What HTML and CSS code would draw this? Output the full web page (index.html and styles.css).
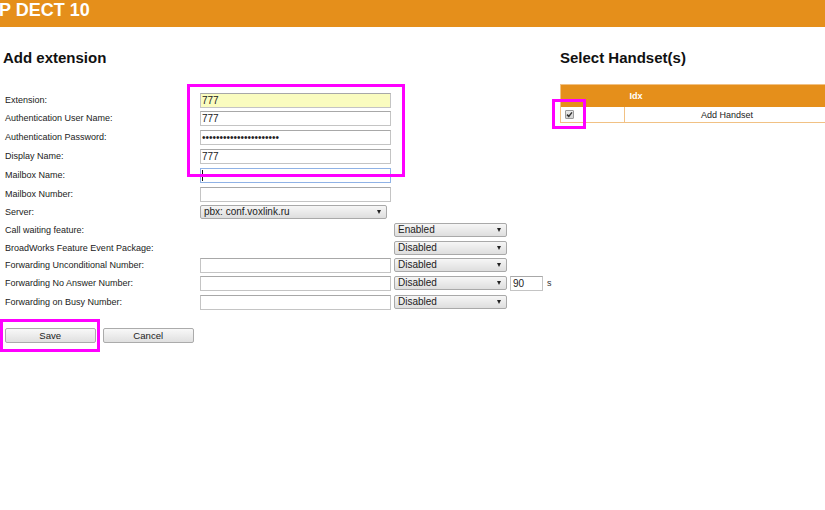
FILE: index.html
```html
<!DOCTYPE html>
<html lang="en">
<head>
<meta charset="utf-8">
<title>Add extension</title>
<link rel="stylesheet" href="styles.css">
</head>
<body>
<header class="topbar"><span class="title">P DECT 10</span></header>
<main class="page">
  <section class="left">
    <h2 class="heading">Add extension</h2>
    <form class="ext-form">
      <label class="c-label">Extension:</label>
      <input class="c-input field autofill" type="text" value="777">

      <label class="c-label">Authentication User Name:</label>
      <input class="c-input field" type="text" value="777">

      <label class="c-label">Authentication Password:</label>
      <input class="c-input field" type="password" value="0123456789012345678901">

      <label class="c-label">Display Name:</label>
      <input class="c-input field" type="text" value="777">

      <label class="c-label">Mailbox Name:</label>
      <span class="c-input focus-wrap"><input class="field focused" type="text" value=""></span>

      <label class="c-label">Mailbox Number:</label>
      <input class="c-input field" type="text" value="">

      <label class="c-label sel-label">Server:</label>
      <span class="c-input sel server"><select><option>pbx: conf.voxlink.ru</option></select></span>

      <label class="c-label sel-label">Call waiting feature:</label>
      <span class="c-select sel"><select><option>Enabled</option><option>Disabled</option></select></span>

      <label class="c-label sel-label">BroadWorks Feature Event Package:</label>
      <span class="c-select sel"><select><option>Disabled</option><option>Enabled</option></select></span>

      <label class="c-label">Forwarding Unconditional Number:</label>
      <input class="c-input field" type="text" value="">
      <span class="c-select sel"><select><option>Disabled</option><option>Enabled</option></select></span>

      <label class="c-label">Forwarding No Answer Number:</label>
      <input class="c-input field" type="text" value="">
      <span class="c-select sel"><select><option>Disabled</option><option>Enabled</option></select></span>
      <input class="c-num field" type="text" value="90">
      <span class="c-unit">s</span>

      <label class="c-label">Forwarding on Busy Number:</label>
      <input class="c-input field" type="text" value="">
      <span class="c-select sel"><select><option>Disabled</option><option>Enabled</option></select></span>
    </form>
    <div class="actions">
      <button type="button" class="btn">Save</button>
      <button type="button" class="btn">Cancel</button>
    </div>
  </section>
  <section class="right">
    <h2 class="heading">Select Handset(s)</h2>
    <table class="handsets">
      <thead>
        <tr><th class="col-check"></th><th class="col-idx">Idx</th></tr>
      </thead>
      <tbody>
        <tr>
          <td class="col-check"><span class="check"><svg viewBox="0 0 9 9" width="9" height="9"><path d="M2 4.6 L3.8 6.4 L7 2.4" fill="none" stroke="#333" stroke-width="1.5"/></svg></span></td>
          <td class="col-name">Add Handset</td>
        </tr>
      </tbody>
    </table>
  </section>
</main>
<div class="mark mark-fields"></div>
<div class="mark mark-save"></div>
<div class="mark mark-check"></div>
</body>
</html>
```
FILE: styles.css
```css
* { box-sizing: border-box; }
html, body { margin: 0; padding: 0; }
body {
  background: #fff;
  font-family: "Liberation Sans", Arial, sans-serif;
  color: #222;
  width: 825px;
  height: 510px;
  overflow: hidden;
  position: relative;
}
.topbar {
  height: 27px;
  background: #e58f1b;
  overflow: hidden;
  padding-top: 1px;
}
.title {
  display: block;
  color: #fff;
  font-weight: bold;
  font-size: 18px;
  line-height: 18px;
  margin-left: -1px;
  white-space: nowrap;
}
.page {
  display: flex;
}
.left {
  width: 560px;
  flex: none;
}
.right {
  width: 270px;
  flex: none;
}
.heading {
  margin: 22px 0 0 0;
  font-size: 15px;
  line-height: 17px;
  font-weight: bold;
  color: #111;
}
.left .heading { margin-left: 3px; }
.right .heading { margin-left: 0; }

.ext-form {
  margin: 26.5px 0 0 5px;
  display: grid;
  grid-template-columns: 192px 191px 113px 33px auto;
  grid-template-rows: 18.5px 19px 19px 19px 19px 18px 18px 17.5px 17px 18.5px 19px 15.5px;
  column-gap: 3px;
  align-items: start;
}
.c-label { grid-column: 1; font-size: 9px; line-height: 15px; color: #222; white-space: nowrap; }
.c-label.sel-label { line-height: 14px; }
.c-input { grid-column: 2; }
.c-select { grid-column: 3; }
.c-num { grid-column: 4; }
.c-unit { grid-column: 5; font-size: 9px; line-height: 15px; margin-left: 1px; color: #333; }

.field {
  display: block;
  height: 15px;
  width: 100%;
  margin: 0;
  padding: 0 1px;
  border: 1px solid #c4c4c4;
  border-top-color: #a8a8a8;
  border-radius: 0;
  background: #fff;
  font-family: "Liberation Sans", Arial, sans-serif;
  font-size: 10px;
  color: #222;
  outline: none;
}
.field.autofill { background: #fafcbf; }
.focus-wrap { position: relative; display: block; height: 15px; }
.focus-wrap .field.focused { border-color: #8fb2e6; }
.focus-wrap::after {
  content: "";
  position: absolute;
  left: 2px;
  top: 2px;
  width: 1px;
  height: 11px;
  background: #111;
}
.c-num { padding-left: 2px; }

.sel { position: relative; display: block; height: 14px; }
.sel.server { width: 187px; }
.sel select {
  display: block;
  appearance: none;
  -webkit-appearance: none;
  width: 100%;
  height: 14px;
  margin: 0;
  padding: 0 3px;
  border: 1px solid #a9a9a9;
  border-radius: 2px;
  background: linear-gradient(#f6f6f6, #dedede);
  font-family: "Liberation Sans", Arial, sans-serif;
  font-size: 10px;
  line-height: 12px;
  color: #222;
  outline: none;
}
.sel::after {
  content: "";
  position: absolute;
  right: 6px;
  top: 5px;
  border-left: 2.5px solid transparent;
  border-right: 2.5px solid transparent;
  border-top: 4px solid #222;
  pointer-events: none;
}

.actions {
  display: flex;
  gap: 7.5px;
  margin: 17.6px 0 0 5px;
}
.btn {
  width: 90.5px;
  height: 15px;
  margin: 0;
  padding: 0;
  border: 1px solid #ababab;
  border-radius: 2px;
  background: linear-gradient(#f8f8f8, #e0e0e0);
  font-family: "Liberation Sans", Arial, sans-serif;
  font-size: 9.6px;
  color: #222;
}

.handsets {
  margin-top: 18.3px;
  width: 270px;
  border-collapse: collapse;
  border: 1px solid #f1c184;
  font-size: 9px;
}
.handsets th {
  background: #e58f1b;
  color: #fff;
  font-weight: bold;
  height: 22px;
  text-align: left;
  padding: 0 0 1px 5px;
  border: none;
}
.handsets th.col-check { width: 64px; }
.handsets td {
  height: 16px;
  padding: 0;
  border-right: 1px solid #f1c184;
  color: #222;
}
.handsets td.col-check { padding-left: 4px; }
.handsets td.col-name { text-align: center; }
.check {
  display: block;
  width: 9px;
  height: 9px;
  border: 1px solid #9a9a9a;
  border-radius: 1px;
  background: linear-gradient(#eaeaea, #d2d2d2);
  position: relative;
}
.check svg { position: absolute; left: -1px; top: -1px; }

.mark {
  position: absolute;
  border: 3px solid #f0f;
  pointer-events: none;
}
.mark-fields { left: 187px; top: 84px; width: 218px; height: 93px; }
.mark-save { left: 0; top: 319px; width: 100px; height: 33px; }
.mark-check { left: 552px; top: 99px; width: 34px; height: 30px; }
```
